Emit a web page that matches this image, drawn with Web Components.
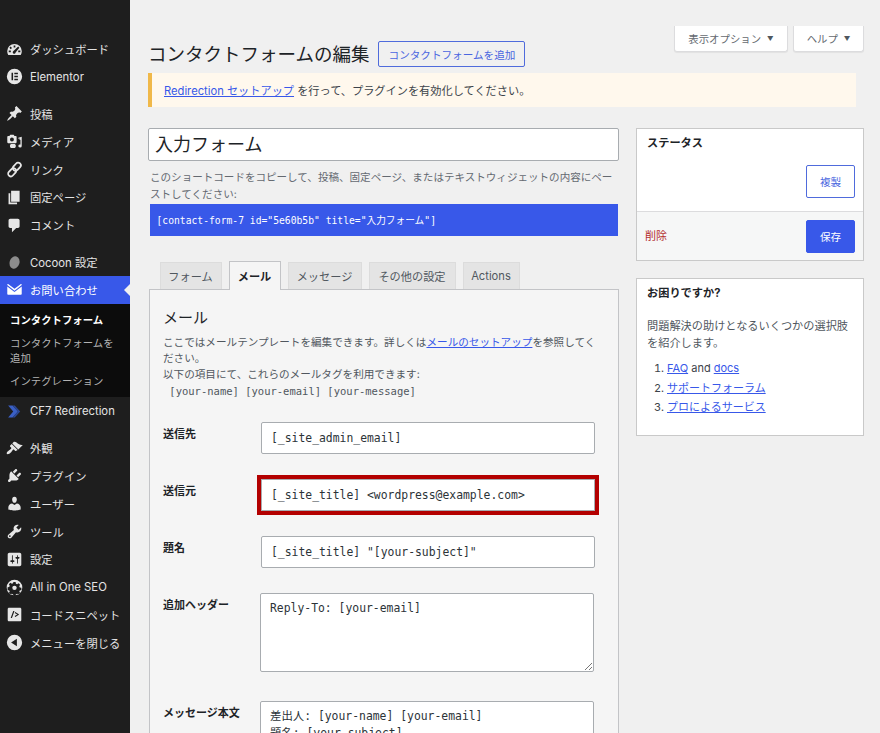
<!DOCTYPE html>
<html lang="ja">
<head>
<meta charset="utf-8">
<title>コンタクトフォームの編集</title>
<style>
  html, body { margin: 0; height: 733px; overflow: hidden; }
  body {
    background: #f0f0f0;
    color: #3c434a;
    font-family: Inter, "Noto Sans CJK JP", sans-serif;
    font-size: 11.2px;
    display: flex;
    align-items: stretch;
  }
</style>
</head>
<body>
<wp-sidebar></wp-sidebar>
<wp-main></wp-main>

<script>
const ICONS = {
  dashboard: '<path fill-rule="evenodd" d="M10 3.5a8.6 8.6 0 0 0-8.6 8.6c0 1.7.5 3.2 1.3 4.4h14.6c.8-1.2 1.3-2.7 1.3-4.4A8.6 8.6 0 0 0 10 3.5zM9 5.2h2v2.4H9zM4 8l1.4-1.4L7 8.2 5.6 9.6zm-.8 3.2h2.5v2H3.200zm11.100-4.700L15.700 7.900 11.300 13.600a1.700 1.700 0 1 1-2.500-1.800zM14.400 11.200h2.500v2h-2.500z"/>',
  elementor: '<path fill-rule="evenodd" d="M10 1a9 9 0 1 0 0 18 9 9 0 0 0 0-18zM6.500 5.500h1.800v9H6.500zm3.300 0h4.200v1.800H9.800zm0 3.600h4.200v1.800H9.800zm0 3.600h4.200v1.800H9.800z"/>',
  post: '<path d="M10.440 3.020l1.820-1.820 6.360 6.350-1.830 1.820c-1.050-.68-2.480-.57-3.410.36l-.75.75c-.92.93-1.040 2.350-.35 3.410l-1.830 1.820-2.410-2.410-2.800 2.790c-.42.42-3.380 2.710-3.800 2.290s1.860-3.390 2.280-3.810l2.790-2.790L4.100 9.360l1.830-1.820c1.050.69 2.480.57 3.400-.36l.75-.75c.93-.92 1.050-2.350.36-3.410z"/>',
  media: '<path fill-rule="evenodd" d="M5 2h4l1 1.500h1.500c.6 0 1 .4 1 1V11c0 .6-.4 1-1 1h-9c-.6 0-1-.4-1-1V4.500c0-.6.4-1 1-1H4zm2 3.400a2.300 2.300 0 1 0 0 4.600 2.300 2.300 0 0 0 0-4.600z"/><path d="M14.500 5.500l4-1v10.800a2 1.800 0 1 1-1.500-1.700V7.800l-1 .3V6.500l-1.500.4z"/><path fill-rule="evenodd" d="M6.500 12.800h3.200c1 0 1.800.8 1.800 1.800v1.200c0 1-.8 1.800-1.800 1.800H6.500c-1 0-1.800-.8-1.800-1.800v-1.200c0-1 .8-1.800 1.800-1.800z"/>',
  link: '<g fill="none" stroke="currentColor" stroke-width="2.100"><rect x="9.600" y="1.300" width="6.300" height="10.800" rx="3.100" transform="rotate(42 12.700 6.700)"/><rect x="4.100" y="7.900" width="6.300" height="10.800" rx="3.100" transform="rotate(42 7.300 13.300)"/></g>',
  page: '<path d="M6 15V2h10v13H6zm-1 1h8v2H3V5h2v11z"/>',
  comment: '<path d="M5 2h9c1.100 0 2 .9 2 2v7c0 1.100-.9 2-2 2h-2l-5 5v-5H5c-1.100 0-2-.9-2-2V4c0-1.100.9-2 2-2z"/>',
  cocoon: '<ellipse cx="10" cy="10" rx="5.800" ry="7.400" transform="rotate(18 10 10)" fill="#8c8c8c"/>',
  mail: '<path d="M1.500 4.200c0-.5.5-.9 1-.7L10 9l7.500-5.500c.5-.2 1 .2 1 .7v.5L10 11.500 1.500 4.700z"/><path d="M1.500 6.500L10 13l8.500-6.500v8.800c0 .6-.4 1-1 1h-15c-.6 0-1-.4-1-1z"/>',
  chevrons: '<path fill="#3a5fc4" d="M2.500 3h5.200L14 10l-6.300 7H2.500l6-7z"/><path fill="#2a4796" d="M7.700 3h2.600L16.700 10l-6.400 7H7.700L14 10z"/>',
  brush: '<path d="M14.480 11.060L7.410 3.990l1.500-1.500c.5-.56 2.300-.47 3.510.32 1.210.8 1.430 1.280 2.910 2.100 1.180.64 2.450 1.260 4.450.85zm-.71.71L6.700 4.700 4.930 6.470c-.39.39-.39 1.020 0 1.410l1.060 1.060c.39.39.39 1.030 0 1.420-.6.6-1.430 1.110-2.210 1.690-.35.26-.7.53-1.010.84C1.430 13.230.5 15 1 16.500c1.500.5 3.270-.43 4.610-1.770.31-.31.58-.66.84-1.010.58-.78 1.090-1.610 1.690-2.210.39-.39 1.030-.39 1.420 0l1.060 1.060c.39.39 1.020.39 1.410 0z"/>',
  plugin: '<path d="M13.110 4.360L9.870 7.600 8 5.730l3.240-3.240c.35-.34 1.050-.2 1.560.32.52.51.66 1.210.31 1.550zm-8 1.770l.91-1.120 9.010 9.010-1.190.84c-.71.71-2.630 1.160-3.820 1.160H6.140L4.900 17.260c-.59.59-1.540.59-2.120 0-.59-.58-.59-1.530 0-2.120l1.240-1.240v-3.880c0-1.130.4-3.190 1.090-3.890zm7.260 3.970l3.240-3.240c.34-.35 1.040-.21 1.550.31.52.51.66 1.210.31 1.550l-3.240 3.250z"/>',
  user: '<path d="M10 9.250c-2.270 0-2.730-3.440-2.730-3.440C7 4.020 7.820 2 9.970 2c2.160 0 2.980 2.020 2.710 3.810 0 0-.41 3.440-2.680 3.440zm0 2.570L12.720 10c2.390 0 4.520 2.330 4.520 4.530v2.490s-3.650 1.130-7.240 1.130c-3.650 0-7.240-1.130-7.240-1.130v-2.490c0-2.250 1.940-4.480 4.470-4.480z"/>',
  tool: '<path d="M16.680 9.770c-1.340 1.340-3.300 1.670-4.950.99l-5.410 6.520c-.99.99-2.590.99-3.580 0s-.99-2.590 0-3.570l6.520-5.420c-.68-1.650-.35-3.610.99-4.950 1.280-1.280 3.120-1.620 4.720-1.060l-2.890 2.890 2.820 2.820 2.860-2.870c.53 1.580.18 3.390-1.080 4.650zM3.810 16.210c.4.39 1.040.39 1.430 0 .4-.4.4-1.040 0-1.430-.39-.4-1.030-.4-1.430 0-.39.39-.39 1.030 0 1.430z"/>',
  settings: '<path d="M18 16V4c0-1.100-.9-2-2-2H4c-1.100 0-2 .9-2 2v12c0 1.100.9 2 2 2h12c1.100 0 2-.9 2-2zM8 11h1c.55 0 1 .45 1 1s-.45 1-1 1H8v1.500c0 .28-.22.5-.5.5s-.5-.22-.5-.5V13H6c-.55 0-1-.45-1-1s.45-1 1-1h1V5.500c0-.28.22-.5.5-.5s.5.22.5.5V11zm5-2h-1c-.55 0-1-.45-1-1s.45-1 1-1h1V5.500c0-.28.22-.5.5-.5s.5.22.5.5V7h1c.55 0 1 .45 1 1s-.45 1-1 1h-1v5.500c0 .28-.22.5-.5.5s-.5-.22-.5-.5V9z"/>',
  aioseo: '<path fill-rule="evenodd" d="M10 .8a9.200 9.200 0 1 0 0 18.400A9.200 9.200 0 0 0 10 .8zM8.700 3.600h2.600l.4 1.900 1.400.6 1.700-1 1.800 1.800-1 1.700.6 1.400 1.900.4v2.600l-1.900.4-.6 1.400 1 1.700-1.800 1.800-1.700-1-1.400.6-.4 1.300H8.700l-.4-1.300-1.400-.6-1.700 1-1.800-1.800 1-1.700-.6-1.400-1.900-.4V9.800l1.900-.4.6-1.400-1-1.700 1.800-1.800 1.700 1 1.400-.6z"/><circle cx="10" cy="10.400" r="2.600"/>',
  snippet: '<path fill-rule="evenodd" d="M3.500 2h13c.8 0 1.500.7 1.500 1.500v13c0 .8-.7 1.500-1.500 1.500h-13c-.8 0-1.500-.7-1.500-1.500v-13C2 2.700 2.700 2 3.500 2zM8.500 6L5.500 14H7l3-8zM11 7l-.8 1.200L13.300 10l-3.100 1.800L11 13l4.500-3z"/>',
  collapse: '<path fill-rule="evenodd" d="M10 1a9 9 0 1 0 0 18 9 9 0 0 0 0-18zm2.800 4.500v9L6 10z"/>'
};

class WpMenuItem extends HTMLElement {
  constructor() {
    super();
    this.attachShadow({ mode: 'open' });
  }

  connectedCallback() {
    const icon = ICONS[this.getAttribute('icon')] || '';
    this.shadowRoot.innerHTML = `
      <style>
        :host {
          display: flex;
          align-items: center;
          height: 27.8px;
          position: relative;
          color: #e4e4e4;
          font-size: 11.3px;
          white-space: nowrap;
        }
        :host([current]) { background: #3858e9; color: #fff; }
        :host([current])::after {
          content: "";
          position: absolute;
          right: 0;
          top: 8px;
          border: 6px solid transparent;
          border-right-color: #f0f0f0;
          border-left: 0;
        }
        :host([sep]) { margin-top: 9.2px; }
        svg { width: 17px; height: 17px; margin: 0 7px 0 6px; fill: currentColor; flex: none; color: #e6e6e6; }
        :host([current]) svg { color: #fff; }
      </style>
      <svg viewBox="0 0 20 20" aria-hidden="true">${icon}</svg>
      <slot></slot>
    `;
  }
}

class WpSidebar extends HTMLElement {
  constructor() {
    super();
    this.attachShadow({ mode: 'open' });
  }

  connectedCallback() {
    this.shadowRoot.innerHTML = `
      <style>
        :host {
          display: block;
          width: 130px;
          flex: none;
          background: #1e1e1e;
          padding-top: 35.3px;
          box-sizing: border-box;
        }
        .sub {
          background: #0c0c0c;
          color: #b4b4b4;
          font-size: 10.4px;
          line-height: 15.5px;
          padding: 9.5px 10px 0;
          height: 93.4px;
          box-sizing: border-box;
        }
        .sub .on { color: #fff; font-weight: 700; margin-bottom: 7px; }
        .sub .last { margin-top: 7px; }
      </style>
      <wp-menu-item icon="dashboard">ダッシュボード</wp-menu-item>
      <wp-menu-item icon="elementor">Elementor</wp-menu-item>
      <wp-menu-item icon="post" sep>投稿</wp-menu-item>
      <wp-menu-item icon="media">メディア</wp-menu-item>
      <wp-menu-item icon="link">リンク</wp-menu-item>
      <wp-menu-item icon="page">固定ページ</wp-menu-item>
      <wp-menu-item icon="comment">コメント</wp-menu-item>
      <wp-menu-item icon="cocoon" sep>Cocoon 設定</wp-menu-item>
      <wp-menu-item icon="mail" current>お問い合わせ</wp-menu-item>
      <nav class="sub">
        <div class="on">コンタクトフォーム</div>
        <div>コンタクトフォームを<br>追加</div>
        <div class="last">インテグレーション</div>
      </nav>
      <wp-menu-item icon="chevrons">CF7 Redirection</wp-menu-item>
      <wp-menu-item icon="brush" sep>外観</wp-menu-item>
      <wp-menu-item icon="plugin">プラグイン</wp-menu-item>
      <wp-menu-item icon="user">ユーザー</wp-menu-item>
      <wp-menu-item icon="tool">ツール</wp-menu-item>
      <wp-menu-item icon="settings">設定</wp-menu-item>
      <wp-menu-item icon="aioseo">All in One SEO</wp-menu-item>
      <wp-menu-item icon="snippet">コードスニペット</wp-menu-item>
      <wp-menu-item icon="collapse">メニューを閉じる</wp-menu-item>
    `;
  }
}

class WpPostbox extends HTMLElement {
  constructor() {
    super();
    this.attachShadow({ mode: 'open' });
  }

  connectedCallback() {
    this.shadowRoot.innerHTML = `
      <style>
        :host {
          display: block;
          background: #fff;
          border: 1px solid #c9c9c9;
          box-sizing: border-box;
        }
        h3 {
          margin: 0;
          padding: 6px 10px 0;
          font-size: 11.2px;
          line-height: 16px;
          font-weight: 700;
          color: #1d2327;
        }
      </style>
      <h3>${this.getAttribute('heading')}</h3>
      <slot></slot>
    `;
  }
}

class WpButton extends HTMLElement {
  constructor() {
    super();
    this.attachShadow({ mode: 'open' });
  }

  connectedCallback() {
    this.shadowRoot.innerHTML = `
      <style>
        :host {
          display: inline-flex;
          align-items: center;
          justify-content: center;
          box-sizing: border-box;
          border: 1px solid #4f6bdc;
          border-radius: 2px;
          background: #fff;
          color: #4a66e0;
          font-size: 10.6px;
          white-space: nowrap;
        }
        :host([primary]) { background: #3858e9; border-color: #3858e9; color: #fff; }
        :host([plain]) { background: transparent; }
      </style>
      <slot></slot>
    `;
  }
}

class CfField extends HTMLElement {
  constructor() {
    super();
    this.attachShadow({ mode: 'open' });
  }

  connectedCallback() {
    const area = this.hasAttribute('area');
    this.shadowRoot.innerHTML = `
      <style>
        :host {
          display: grid;
          grid-template-columns: 98px 334px;
          align-items: start;
        }
        :host([area]) { grid-template-columns: 97px 334px; }
        label {
          font-size: 11px;
          font-weight: 700;
          line-height: 16px;
          color: #1d2327;
          padding-top: 4px;
          white-space: nowrap;
        }
        .box {
          box-sizing: border-box;
          background: #fff;
          border: 1px solid #a8acb0;
          border-radius: 2px;
          height: var(--box-height, 32px);
          padding: 0 9px;
          display: flex;
          align-items: center;
          font-family: "DejaVu Sans Mono", "Noto Sans CJK JP", monospace;
          font-size: 11.4px;
          color: #2c3338;
          white-space: pre;
          position: relative;
        }
        :host([area]) .box { align-items: flex-start; padding: 6px 9px; line-height: 17px; overflow: hidden; }
        :host([mark]) .box { outline: 4px solid #b30000; border-radius: 0; }
        .grip { position: absolute; right: 1px; bottom: 1px; width: 8px; height: 8px; }
      </style>
      <label><slot name="label"></slot></label>
      <div class="box"><slot></slot>${area && this.hasAttribute('grip') ? '<svg class="grip" viewBox="0 0 8 8"><path d="M1 8L8 1M5 8l3-3" stroke="#777" fill="none"/></svg>' : ''}</div>
    `;
  }
}

class CfEditor extends HTMLElement {
  constructor() {
    super();
    this.attachShadow({ mode: 'open' });
  }

  connectedCallback() {
    this.shadowRoot.innerHTML = `
      <style>
        :host { display: block; margin: 26px 0 0 1px; }
        .tabs { display: flex; gap: 7px; padding-left: 10.5px; height: 27px; position: relative; z-index: 1; }
        .tab {
          box-sizing: border-box;
          height: 27px;
          background: #e4e4e4;
          border: 1px solid #dcdcdc;
          border-bottom: 0;
          color: #50575e;
          font-size: 11.2px;
          display: flex;
          align-items: center;
          justify-content: center;
        }
        .tab.on {
          background: #f5f5f5;
          border-color: #c3c4c7;
          color: #1d2327;
          font-weight: 700;
          height: 29px;
          margin-top: -1px;
        }
        .panel {
          background: #f5f5f5;
          border: 1px solid #c3c4c7;
          padding: 17px 20px 0 13px;
          height: 480px;
          box-sizing: border-box;
        }
        h2 { margin: 0; font-size: 15px; line-height: 22px; font-weight: 400; color: #1d2327; }
        p { margin: 6px 0 0; font-size: 10.6px; line-height: 16.3px; color: #50575e; }
        a { color: #3858e9; }
        code { font-family: "DejaVu Sans Mono", monospace; font-size: 10.5px; white-space: pre; }
        .rows { margin: 21px -20px 0 0; display: grid; row-gap: 25px; }
      </style>
      <div class="tabs">
        <div class="tab" style="width:62px">フォーム</div>
        <div class="tab on" style="width:52px">メール</div>
        <div class="tab" style="width:74px">メッセージ</div>
        <div class="tab" style="width:87px">その他の設定</div>
        <div class="tab" style="width:57px">Actions</div>
      </div>
      <section class="panel">
        <h2>メール</h2>
        <p>ここではメールテンプレートを編集できます。詳しくは<a href="#">メールのセットアップ</a>を参照してください。<br>以下の項目にて、これらのメールタグを利用できます:<br><code> [your-name] [your-email] [your-message]</code></p>
        <div class="rows">
          <cf-field><span slot="label">送信先</span>[_site_admin_email]</cf-field>
          <cf-field mark><span slot="label">送信元</span>[_site_title] &lt;wordpress@example.com&gt;</cf-field>
          <cf-field><span slot="label">題名</span>[_site_title] "[your-subject]"</cf-field>
          <cf-field area grip style="--box-height:79px"><span slot="label">追加ヘッダー</span>Reply-To: [your-email]</cf-field>
          <cf-field area style="--box-height:120px;margin-top:4px"><span slot="label">メッセージ本文</span>差出人: [your-name] [your-email]
題名: [your-subject]</cf-field>
        </div>
      </section>
    `;
  }
}

class WpMain extends HTMLElement {
  constructor() {
    super();
    this.attachShadow({ mode: 'open' });
  }

  connectedCallback() {
    this.shadowRoot.innerHTML = `
      <style>
        :host {
          display: block;
          flex: 1;
          min-width: 0;
          box-sizing: border-box;
          padding: 26px 16px 0 18px;
        }
        .screen { display: flex; justify-content: flex-end; gap: 5px; height: 26px; margin-bottom: -15px; }
        .screen div {
          box-sizing: border-box;
          background: #fff;
          border: 1px solid #dcdcde;
          border-top: 0;
          border-radius: 0 0 3px 3px;
          box-shadow: 0 1px 1px rgba(0,0,0,.06);
          color: #646970;
          font-size: 10.4px;
          display: flex;
          align-items: center;
          justify-content: center;
          gap: 6px;
        }
        .screen i { font-style: normal; font-size: 6.5px; color: #50575e; }
        .head { display: flex; align-items: center; gap: 9px; height: 34px; margin: 0 -1px 2px 0; }
        h1 { margin: -1px 0 0 0; font-size: 18.5px; line-height: 26px; font-weight: 400; color: #1d2327; white-space: nowrap; }
        .head wp-button { width: 147px; height: 26px; }
        .notice {
          box-sizing: border-box;
          height: 34px;
          width: 708px;
          background: #fff8ed;
          border-left: 4px solid #f0b849;
          padding-left: 12px;
          display: flex;
          align-items: center;
          font-size: 11.2px;
          color: #3c434a;
          white-space: pre;
        }
        .notice a { color: #3858e9; }
        .cols { display: grid; grid-template-columns: 471px 228px; column-gap: 17px; margin-top: 21px; align-items: start; }
        .title {
          box-sizing: border-box;
          height: 33px;
          background: #fff;
          border: 1px solid #a8acb0;
          border-radius: 2px;
          padding: 0 6px 4px;
          display: flex;
          align-items: center;
          font-size: 18px;
          color: #1d2327;
        }
        .hint { margin: 7.5px 2px 0; font-size: 10.55px; line-height: 17px; color: #646970; }
        .code {
          margin: 1px 1px 0 2px;
          height: 32px;
          box-sizing: border-box;
          background: #3858e9;
          color: #fff;
          padding: 0 6.5px;
          display: flex;
          align-items: center;
          font-family: "DejaVu Sans Mono", "Noto Sans CJK JP", monospace;
          font-size: 9.7px;
          white-space: pre;
        }
        .side { display: grid; row-gap: 17px; }
        .status { height: 133px; }
        .row1 { display: flex; justify-content: flex-end; padding: 14px 8px 0; }
        .row1 wp-button, .row2 wp-button { width: 49px; height: 33px; }
        .row2 {
          margin-top: 13px;
          border-top: 1px solid #dcdcde;
          background: #f6f7f7;
          height: 49px;
          box-sizing: border-box;
          padding: 8px 8px 0;
          display: flex;
          justify-content: space-between;
          align-items: flex-start;
        }
        .row2 span { color: #b32d2e; font-size: 11px; padding-top: 7px; }
        .helpbox { height: 158px; }
        .helpbox p { margin: 17px 10px 0; font-size: 11.2px; line-height: 17px; color: #50575e; }
        .helpbox ol { margin: 7px 0 0; padding: 0 0 0 30px; font-size: 11px; line-height: 19.7px; color: #3c434a; }
        .helpbox a { color: #3858e9; }
      </style>
      <div class="screen">
        <div style="width:114px">表示オプション <i>▼</i></div>
        <div style="width:71px">ヘルプ <i>▼</i></div>
      </div>
      <div class="head">
        <h1>コンタクトフォームの編集</h1>
        <wp-button plain>コンタクトフォームを追加</wp-button>
      </div>
      <div class="notice"><a href="#">Redirection セットアップ</a> を行って、プラグインを有効化してください。</div>
      <div class="cols">
        <div>
          <div class="title">入力フォーム</div>
          <p class="hint">このショートコードをコピーして、投稿、固定ページ、またはテキストウィジェットの内容にペーストしてください:</p>
          <div class="code">[contact-form-7 id="5e60b5b" title="入力フォーム"]</div>
          <cf-editor></cf-editor>
        </div>
        <div class="side">
          <wp-postbox class="status" heading="ステータス">
            <div class="row1"><wp-button>複製</wp-button></div>
            <div class="row2"><span>削除</span><wp-button primary>保存</wp-button></div>
          </wp-postbox>
          <wp-postbox class="helpbox" heading="お困りですか?">
            <p>問題解決の助けとなるいくつかの選択肢を紹介します。</p>
            <ol>
              <li><a href="#">FAQ</a> and <a href="#">docs</a></li>
              <li><a href="#">サポートフォーラム</a></li>
              <li><a href="#">プロによるサービス</a></li>
            </ol>
          </wp-postbox>
        </div>
      </div>
    `;
  }
}

customElements.define('wp-menu-item', WpMenuItem);
customElements.define('wp-sidebar', WpSidebar);
customElements.define('wp-postbox', WpPostbox);
customElements.define('wp-button', WpButton);
customElements.define('cf-field', CfField);
customElements.define('cf-editor', CfEditor);
customElements.define('wp-main', WpMain);
</script>
</body>
</html>
